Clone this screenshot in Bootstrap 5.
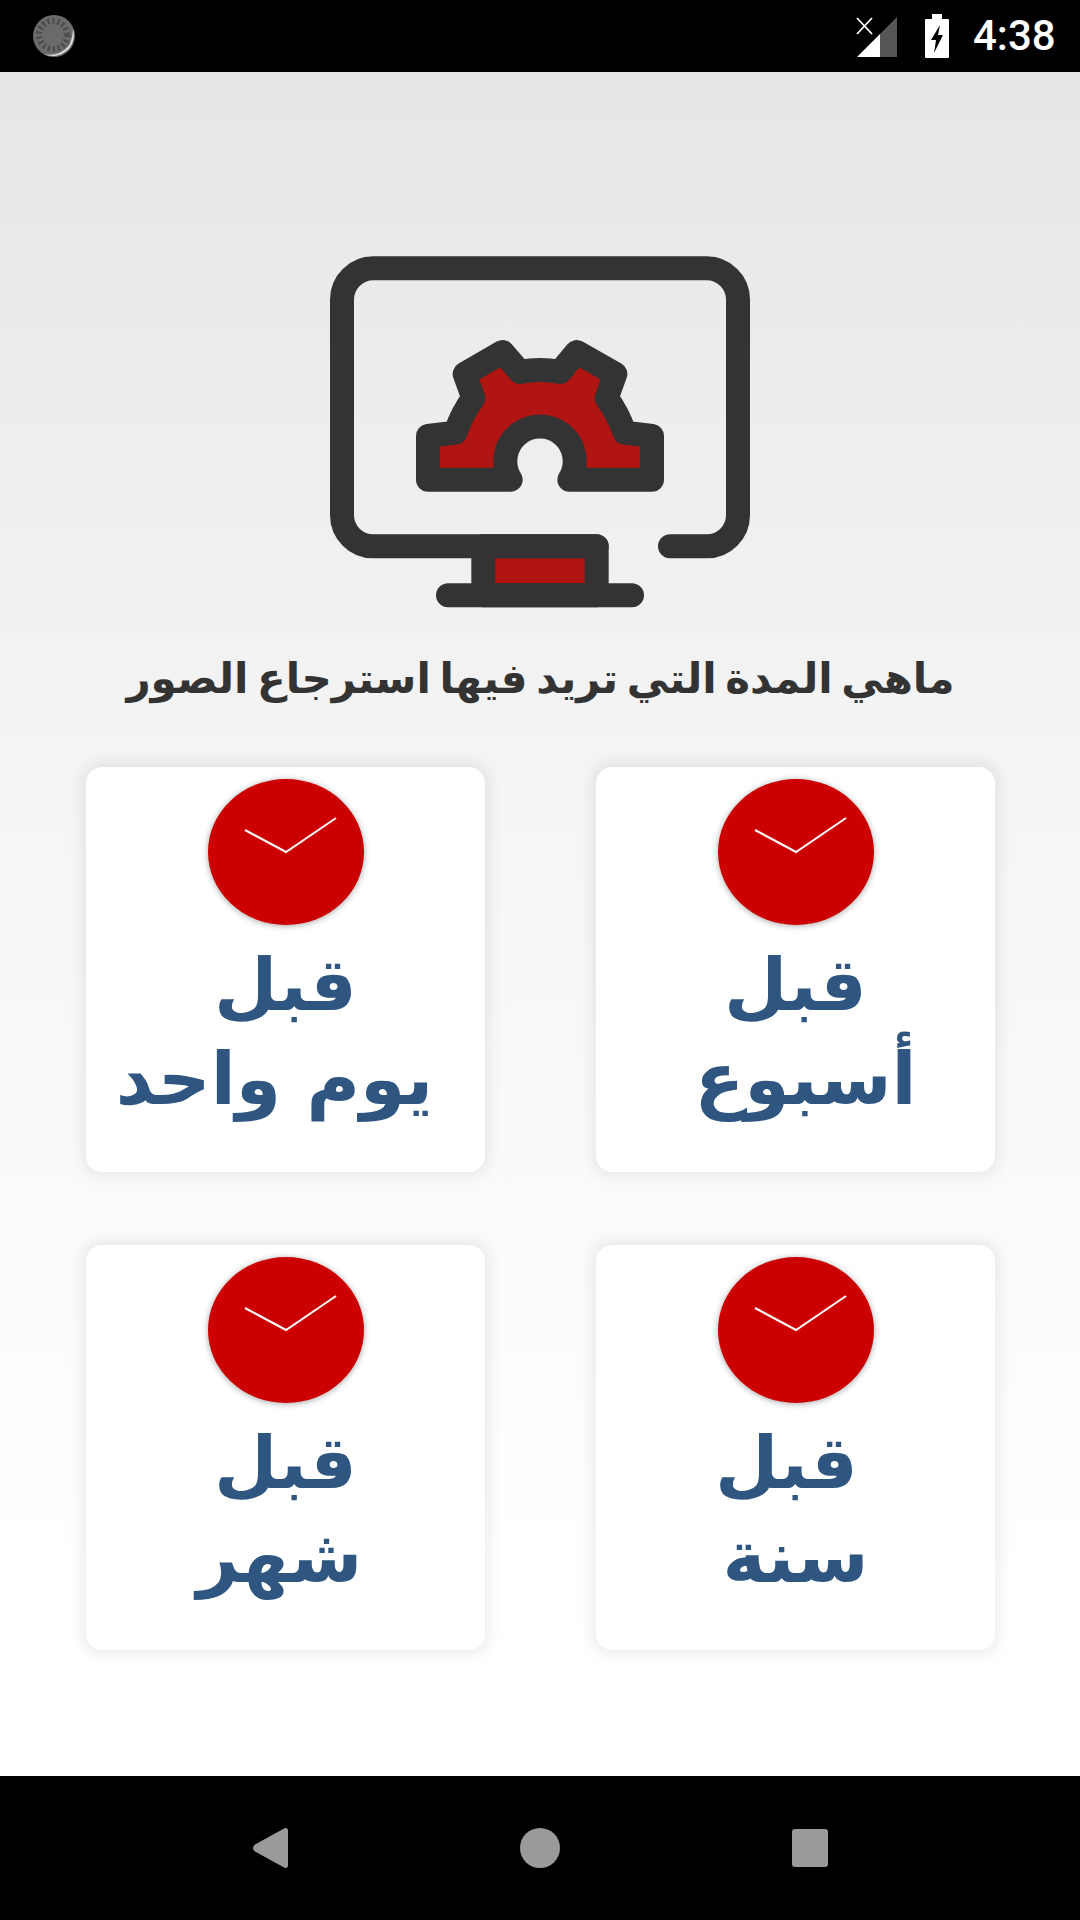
<!DOCTYPE html>
<html lang="ar">
<head>
<meta charset="utf-8">
<title>استرجاع الصور</title>
<link rel="stylesheet" href="https://cdn.jsdelivr.net/npm/bootstrap@5.3.0/dist/css/bootstrap.min.css">
<style>
html,body{height:100%;margin:0}
body{font-family:"DejaVu Sans","Noto Sans",sans-serif;background:#000}
.app-frame{width:1080px;height:1920px}
.status-strip{height:72px;background:#000;color:#fff;padding:0 25px 0 32px}
.status-time{font-family:Roboto,"Liberation Sans",sans-serif;font-size:42px;line-height:1;font-weight:500;width:82px;white-space:nowrap}
.signal-icon{margin-right:27px}
.battery-icon{margin-right:24px}
.screen-area{height:1704px;background:linear-gradient(#e6e6e6 0,#f6f6f6 45%,#fff 88%);padding:0 85px 0 86px}
.hero-icon{display:block;width:460px;height:380px;margin:168px 0 0 224px}
.prompt-title{font-family:"DejaVu Sans",sans-serif;font-weight:700;font-size:42px;word-spacing:-6px;line-height:60px;color:#333;margin:29px 0 0;text-align:center;white-space:nowrap}
.choice-grid{--bs-gutter-x:111px;--bs-gutter-y:73px;margin-top:-15px}
.choice-tile{height:405px;background:#fff;border-radius:16px;box-shadow:0 0 14px 5px rgba(0,0,0,.07);padding-top:12px;text-align:center}
.clock-face{display:block;width:156px;height:146px;margin:0 auto;filter:drop-shadow(0 1px 3px rgba(0,0,0,.35))}
.choice-label{font-weight:700;font-size:73px;line-height:94px;color:#2f5680;margin-top:13px;white-space:nowrap}
.nudge-day{padding-right:22px}
.nudge-week{padding-left:20px}
.nudge-month{padding-right:12px}
.nudge-before{padding-right:18px}
.nav-strip{height:144px;background:#000}
</style>
</head>
<body>
<div class="app-frame d-flex flex-column">
  <div class="status-strip d-flex align-items-center">
    <svg width="44" height="44" viewBox="0 0 44 44" aria-hidden="true">
      <circle cx="22" cy="22" r="21" fill="#6a6a6a"/>
      <path d="M41 15A21 21 0 0 1 12 40A24 24 0 0 0 38 30Q41 22 41 15Z" fill="#ddd"/>
      <circle cx="21" cy="21" r="14" fill="none" stroke="#4a4a4a" stroke-width="6" stroke-dasharray="2 3"/>
    </svg>
    <div class="ms-auto d-flex align-items-center">
      <svg class="signal-icon" width="42" height="42" viewBox="0 -2 42 42" aria-hidden="true">
        <path d="M24 17L41 0V40H24Z" fill="#555"/>
        <path d="M1 40L24 17V40Z" fill="#fff"/>
        <path d="M1 1L16 17M16 1L1 17" stroke="#fff" stroke-width="1.8"/>
      </svg>
      <svg class="battery-icon" width="24" height="44" viewBox="0 0 24 44" aria-hidden="true">
        <path d="M7 0H17V5H23Q24 5 24 6V43Q24 44 23 44H1Q0 44 0 43V6Q0 5 1 5H7Z" fill="#fff"/>
        <path d="M15 11L6 26H11L9 39L18 21H13Z" fill="#000"/>
      </svg>
      <span class="status-time">4:38</span>
    </div>
  </div>
  <main class="screen-area">
    <svg class="hero-icon" viewBox="0 0 1380 1140" aria-hidden="true">
      <rect x="520" y="919" width="340" height="147" fill="#b01512" stroke="#333" stroke-width="72" stroke-linejoin="round"/>
      <path d="M1080 919H1190A94 94 0 0 0 1284 825V179A94 94 0 0 0 1190 85H190A94 94 0 0 0 96 179V825A94 94 0 0 0 190 919H860M414 1066H966" fill="none" stroke="#333" stroke-width="72" stroke-linecap="round" stroke-linejoin="round"/>
      <path d="M602 719H354V588L436 578Q456 520 490 474L464 402L578 336L630 396Q690 384 750 396L800 336L916 402L890 474Q924 520 944 578L1026 588V719H778A104 104 0 1 0 602 719Z" fill="#b01512" stroke="#333" stroke-width="72" stroke-linejoin="round"/>
    </svg>
    <h1 class="prompt-title" dir="rtl">ماهي المدة التي تريد فيها استرجاع الصور</h1>
    <div class="row choice-grid">
      <div class="col-6"><div class="choice-tile">
        <svg class="clock-face" viewBox="0 0 156 146" aria-hidden="true"><ellipse cx="78" cy="73" rx="78" ry="73" fill="#cc0000"/><path d="M37 51L78 73L128 39" fill="none" stroke="#fff" stroke-width="2"/></svg>
        <div class="choice-label" dir="rtl">قبل<div class="nudge-day">يوم واحد</div></div>
      </div></div>
      <div class="col-6"><div class="choice-tile">
        <svg class="clock-face" viewBox="0 0 156 146" aria-hidden="true"><ellipse cx="78" cy="73" rx="78" ry="73" fill="#cc0000"/><path d="M37 51L78 73L128 39" fill="none" stroke="#fff" stroke-width="2"/></svg>
        <div class="choice-label" dir="rtl">قبل<div class="nudge-week">أسبوع</div></div>
      </div></div>
      <div class="col-6"><div class="choice-tile">
        <svg class="clock-face" viewBox="0 0 156 146" aria-hidden="true"><ellipse cx="78" cy="73" rx="78" ry="73" fill="#cc0000"/><path d="M37 51L78 73L128 39" fill="none" stroke="#fff" stroke-width="2"/></svg>
        <div class="choice-label" dir="rtl">قبل<div class="nudge-month">شهر</div></div>
      </div></div>
      <div class="col-6"><div class="choice-tile">
        <svg class="clock-face" viewBox="0 0 156 146" aria-hidden="true"><ellipse cx="78" cy="73" rx="78" ry="73" fill="#cc0000"/><path d="M37 51L78 73L128 39" fill="none" stroke="#fff" stroke-width="2"/></svg>
        <div class="choice-label" dir="rtl"><div class="nudge-before">قبل</div>سنة</div>
      </div></div>
    </div>
  </main>
  <div class="nav-strip">
    <svg class="d-block" width="1080" height="144" viewBox="0 0 1080 144" aria-hidden="true">
      <path d="M253 72Q253 70 255 68.500L284 52.500Q288 51 288 55V89Q288 93 284 91.500L255 75.500Q253 74 253 72Z" fill="#9a9a9a"/>
      <ellipse cx="540" cy="72" rx="20" ry="20" fill="#9a9a9a"/>
      <rect x="792" y="53" width="36" height="38" rx="3" fill="#9a9a9a"/>
    </svg>
  </div>
</div>
<script src="https://cdn.jsdelivr.net/npm/bootstrap@5.3.0/dist/js/bootstrap.bundle.min.js"></script>
</body>
</html>
